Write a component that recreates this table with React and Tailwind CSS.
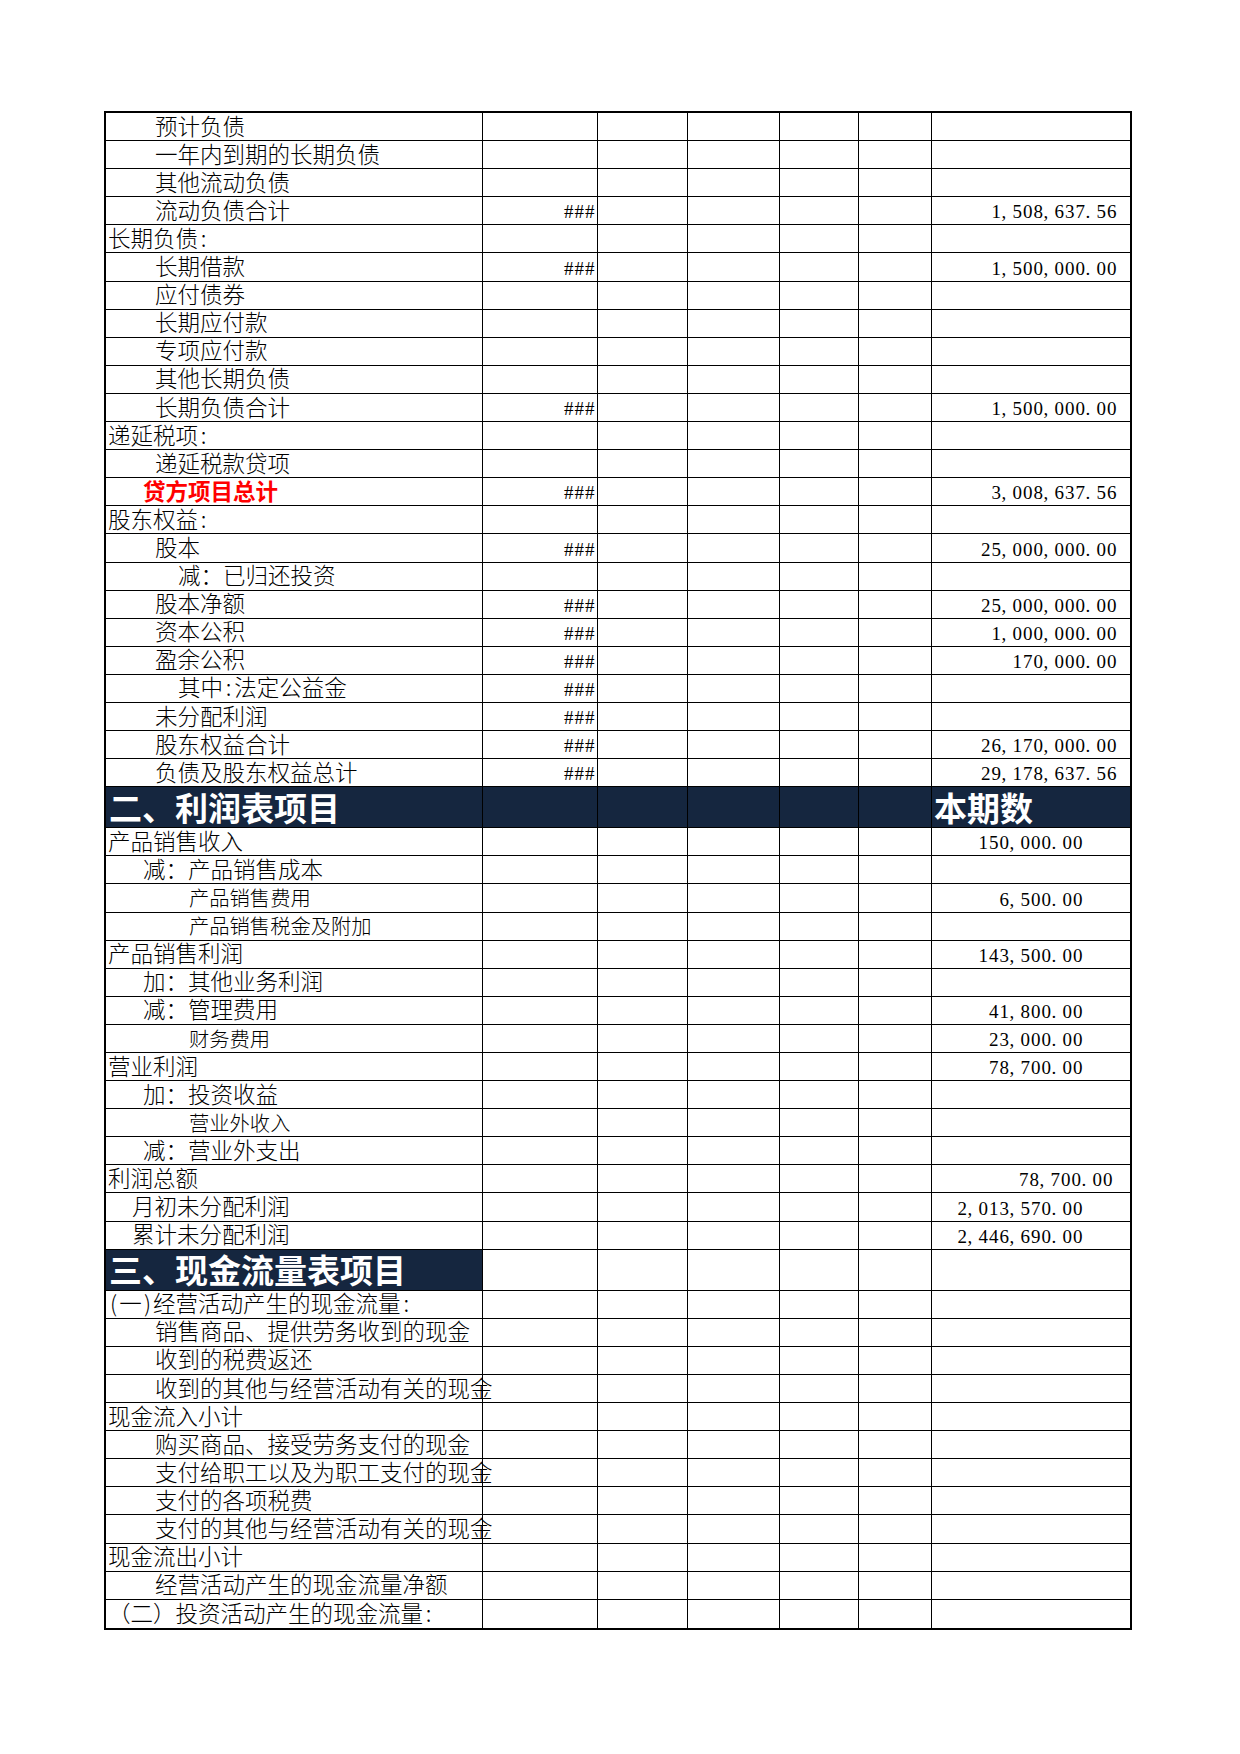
import React from "react";

// label indent classes
const I0 = "pl-[2px]";
const I1 = "pl-[37px]";
const I2 = "pl-[49px]";
const I3 = "pl-[72px]";
const I4 = "pl-[83px]";
const IM = "pl-[26px]";

const balance = [
  { t: "预计负债", i: I2 },
  { t: "一年内到期的长期负债", i: I2 },
  { t: "其他流动负债", i: I2 },
  { t: "流动负债合计", i: I2, h: true, v: "1,508,637.56" },
  { t: "长期负债:", i: I0 },
  { t: "长期借款", i: I2, h: true, v: "1,500,000.00" },
  { t: "应付债券", i: I2 },
  { t: "长期应付款", i: I2 },
  { t: "专项应付款", i: I2 },
  { t: "其他长期负债", i: I2 },
  { t: "长期负债合计", i: I2, h: true, v: "1,500,000.00" },
  { t: "递延税项:", i: I0 },
  { t: "递延税款贷项", i: I2 },
  { t: "贷方项目总计", i: I1, h: true, v: "3,008,637.56", red: true },
  { t: "股东权益:", i: I0 },
  { t: "股本", i: I2, h: true, v: "25,000,000.00" },
  { t: "减：已归还投资", i: I3 },
  { t: "股本净额", i: I2, h: true, v: "25,000,000.00" },
  { t: "资本公积", i: I2, h: true, v: "1,000,000.00" },
  { t: "盈余公积", i: I2, h: true, v: "170,000.00" },
  { t: "其中:法定公益金", i: I3, h: true },
  { t: "未分配利润", i: I2, h: true },
  { t: "股东权益合计", i: I2, h: true, v: "26,170,000.00" },
  { t: "负债及股东权益总计", i: I2, h: true, v: "29,178,637.56" },
];

const income = [
  { t: "产品销售收入", i: I0, v: "150,000.00", pr: "pr-[47px]" },
  { t: "减：产品销售成本", i: I1 },
  { t: "产品销售费用", i: I4, sm: true, v: "6,500.00", pr: "pr-[47px]" },
  { t: "产品销售税金及附加", i: I4, sm: true },
  { t: "产品销售利润", i: I0, v: "143,500.00", pr: "pr-[47px]" },
  { t: "加：其他业务利润", i: I1 },
  { t: "减：管理费用", i: I1, v: "41,800.00", pr: "pr-[47px]" },
  { t: "财务费用", i: I4, sm: true, v: "23,000.00", pr: "pr-[47px]" },
  { t: "营业利润", i: I0, v: "78,700.00", pr: "pr-[47px]" },
  { t: "加：投资收益", i: I1 },
  { t: "营业外收入", i: I4, sm: true },
  { t: "减：营业外支出", i: I1 },
  { t: "利润总额", i: I0, v: "78,700.00", pr: "pr-[17px]" },
  { t: "月初未分配利润", i: IM, v: "2,013,570.00", pr: "pr-[47px]" },
  { t: "累计未分配利润", i: IM, v: "2,446,690.00", pr: "pr-[47px]" },
];

const cash = [
  { t: "(一)经营活动产生的现金流量:", i: I0 },
  { t: "销售商品、提供劳务收到的现金", i: I2 },
  { t: "收到的税费返还", i: I2 },
  { t: "收到的其他与经营活动有关的现金", i: I2 },
  { t: "现金流入小计", i: I0 },
  { t: "购买商品、接受劳务支付的现金", i: I2 },
  { t: "支付给职工以及为职工支付的现金", i: I2 },
  { t: "支付的各项税费", i: I2 },
  { t: "支付的其他与经营活动有关的现金", i: I2 },
  { t: "现金流出小计", i: I0 },
  { t: "经营活动产生的现金流量净额", i: I2 },
  { t: "（二）投资活动产生的现金流量:", i: I0 },
];

// half-width digits laid out on a fixed pitch, like the sheet's font
function Num({ v }) {
  return (
    <span className="flex font-['Liberation_Serif',serif] text-[19px] leading-none">
      {v.split("").map((c, k) => (
        <span
          key={k}
          className={`inline-block w-[10.5px] ${
            c === "," || c === "." ? "text-left" : "text-center"
          }`}
        >
          {c}
        </span>
      ))}
    </span>
  );
}

// ascii punctuation in labels takes half a cell
function Label({ t }) {
  const parts = t.split(/([():])/);
  return (
    <>
      {parts.map((p, k) =>
        p === "(" || p === ")" || p === ":" ? (
          <span key={k} className="inline-block w-[11.3px] text-center">
            {p}
          </span>
        ) : (
          <span key={k}>{p}</span>
        )
      )}
    </>
  );
}

function Blank() {
  return (
    <>
      <div className="w-[90px] shrink-0 border-r border-black" />
      <div className="w-[92px] shrink-0 border-r border-black" />
      <div className="w-[79px] shrink-0 border-r border-black" />
      <div className="w-[73px] shrink-0 border-r border-black" />
    </>
  );
}

function Row({ r }) {
  return (
    <div className="flex h-[28.1px] shrink-0 border-b border-black last:border-b-0">
      <div
        className={`relative z-10 w-[377px] shrink-0 border-r border-black flex items-end pb-[4px] whitespace-nowrap leading-none ${
          r.i
        } ${r.sm ? "text-[20.3px]" : "text-[22.5px]"} ${
          r.red ? "text-[#ff0000] font-bold" : "text-black font-light"
        }`}
      >
        <Label t={r.t} />
      </div>
      <div className="w-[115px] shrink-0 border-r border-black flex items-end justify-end pr-[2px] pb-[3px]">
        {r.h && <Num v="###" />}
      </div>
      <Blank />
      <div className={`flex-1 flex items-end justify-end pb-[3px] ${r.pr || "pr-[13px]"}`}>
        {r.v && <Num v={r.v} />}
      </div>
    </div>
  );
}

export default function App() {
  return (
    <div className="min-h-[1754px] bg-white pt-[111px] pl-[104px] font-['Noto_Sans_CJK_SC',sans-serif]">
      <div className="w-[1028px] border-2 border-black flex flex-col">
        {balance.map((r, k) => (
          <Row key={"b" + k} r={r} />
        ))}

        {/* 利润表 header */}
        <div className="flex h-[41px] shrink-0 border-b border-black bg-[#15263f] text-white font-bold text-[33px] leading-none">
          <div className="w-[377px] shrink-0 border-r border-black flex items-center pl-[3px]">
            二、利润表项目
          </div>
          <div className="w-[115px] shrink-0 border-r border-black" />
          <Blank />
          <div className="flex-1 flex items-center pl-[2px]">本期数</div>
        </div>

        {income.map((r, k) => (
          <Row key={"i" + k} r={r} />
        ))}

        {/* 现金流量表 header */}
        <div className="flex h-[41px] shrink-0 border-b border-black">
          <div className="w-[377px] shrink-0 border-r border-black flex items-center pl-[3px] bg-[#15263f] text-white font-bold text-[33px] leading-none">
            三、现金流量表项目
          </div>
          <div className="w-[115px] shrink-0 border-r border-black" />
          <Blank />
          <div className="flex-1" />
        </div>

        {cash.map((r, k) => (
          <Row key={"c" + k} r={r} />
        ))}
      </div>
    </div>
  );
}
